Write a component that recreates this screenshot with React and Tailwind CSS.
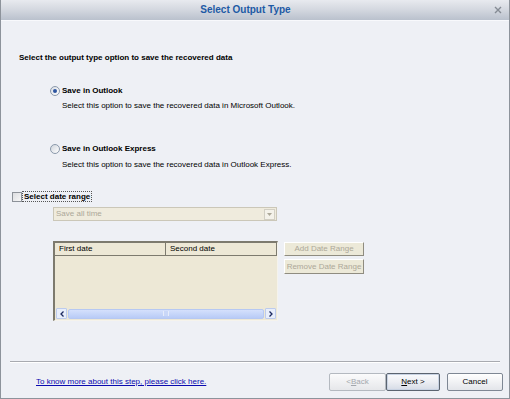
export default function App() {
  return (
    <div className="w-[510px] h-[399px] bg-[#eef0f5] overflow-hidden font-['Liberation_Sans',Arial,sans-serif] text-[8px] leading-[10px] text-black border-x border-b border-[#8d939b] flex flex-col">
      {/* Title bar */}
      <div className="h-[21px] shrink-0 bg-gradient-to-b from-[#e8eaef] via-[#d3d7df] to-[#bac1cd] border-b border-[#f8f9fc] grid grid-cols-[40px_1fr_40px] items-center">
        <div />
        <div className="text-center text-[#1d5aa5] font-bold text-[10px] leading-[12px] pr-[19px]">Select Output Type</div>
        <div className="flex justify-end pr-[7px]">
          <svg width="8" height="8" viewBox="0 0 8 8">
            <path d="M1 1 L7 7 M7 1 L1 7" stroke="#858b94" strokeWidth="1.4" />
          </svg>
        </div>
      </div>

      {/* Body */}
      <div className="flex flex-col flex-1">
        <div className="mt-[32px] pl-[18px] font-bold h-[10px]">Select the output type option to save the recovered data</div>

        {/* Option 1 */}
        <div className="mt-[23px] pl-[49px] flex items-center h-[10px] gap-[2px]">
          <span className="w-[10px] h-[10px] rounded-full border border-[#8b99ab] bg-gradient-to-br from-[#d8dde4] to-[#ffffff] flex items-center justify-center">
            <span className="w-[4px] h-[4px] rounded-full bg-[#2e55a0]" />
          </span>
          <span className="font-bold">Save in Outlook</span>
        </div>
        <div className="mt-[5px] pl-[61px] h-[10px]">Select this option to save the recovered data in Microsoft Outlook.</div>

        {/* Option 2 */}
        <div className="mt-[33px] pl-[49px] flex items-center h-[10px] gap-[2px]">
          <span className="w-[10px] h-[10px] rounded-full border border-[#8b99ab] bg-gradient-to-br from-[#d0d5dc] to-[#ffffff]" />
          <span className="font-bold">Save in Outlook Express</span>
        </div>
        <div className="mt-[6px] pl-[61px] h-[10px]">Select this option to save the recovered data in Outlook Express.</div>

        {/* Checkbox */}
        <div className="mt-[21px] pl-[11px] flex items-center h-[11px]">
          <span className="w-[10px] h-[10px] border border-[#8d9299] bg-gradient-to-br from-[#dcdde0] to-[#f7f7f7]" />
          <span className="font-bold border border-dotted border-[#555] px-[1px] leading-[9px]">Select date range</span>
        </div>

        {/* Combo */}
        <div className="mt-[5px] ml-[52px] w-[224px] h-[14px] border border-[#cbc7b8] bg-[#efebdd] flex items-center justify-between">
          <span className="pl-[2px] text-[#aca899]">Save all time</span>
          <span className="w-[11px] h-[11px] mr-[1px] border border-[#d2cfc4] bg-[#f4f2ea] flex items-center justify-center">
            <svg width="5" height="3" viewBox="0 0 5 3"><path d="M0 0 L5 0 L2.5 3 Z" fill="#aca899" /></svg>
          </span>
        </div>

        {/* List + buttons */}
        <div className="mt-[20px] ml-[52px] flex gap-[6px]">
          <div className="w-[225px] h-[80px] border-t-2 border-l-2 border-r border-b border-t-[#7d7a6e] border-l-[#7d7a6e] border-r-[#f5f3ec] border-b-[#f5f3ec] bg-[#ede8d6] flex flex-col">
            <div className="h-[13px] flex border-b border-[#7d7a6e]">
              <div className="w-[111px] border-r border-[#7d7a6e] pl-[4px] flex items-center">First date</div>
              <div className="flex-1 border-r border-[#7d7a6e] pl-[4px] flex items-center">Second date</div>
            </div>
            <div className="flex-1" />
            <div className="h-[12px] flex items-center gap-[1px] px-[1px] pb-[1px]">
              <span className="w-[11px] h-[11px] bg-[#e8eefb] border border-[#bccbed] rounded-[1px] flex items-center justify-center">
                <svg width="4" height="6" viewBox="0 0 4 6"><path d="M3.5 0.5 L1 3 L3.5 5.5" stroke="#1d2a60" strokeWidth="1.3" fill="none" /></svg>
              </span>
              <span className="flex-1 h-[10px] bg-gradient-to-b from-[#d4e0fc] to-[#b8cbf6] border border-[#b6c8f2] rounded-[2px] flex items-center justify-center">
                <span className="w-[6px] h-[5px] border-x border-[#e6ecfb] bg-[#c9d7f8]" />
              </span>
              <span className="w-[11px] h-[11px] bg-[#e8eefb] border border-[#bccbed] rounded-[1px] flex items-center justify-center">
                <svg width="4" height="6" viewBox="0 0 4 6"><path d="M0.5 0.5 L3 3 L0.5 5.5" stroke="#1d2a60" strokeWidth="1.3" fill="none" /></svg>
              </span>
            </div>
          </div>
          <div className="flex flex-col gap-[3px] pt-[1px]">
            <div className="w-[80px] h-[14px] bg-[#ece9d8] border border-t-[#ffffff] border-l-[#ffffff] border-r-[#8f8c80] border-b-[#8f8c80] text-[#aca899] flex items-center justify-center">Add Date Range</div>
            <div className="w-[80px] h-[15px] bg-[#ece9d8] border border-t-[#ffffff] border-l-[#ffffff] border-r-[#8f8c80] border-b-[#8f8c80] text-[#aca899] flex items-center justify-center">Remove Date Range</div>
          </div>
        </div>

        {/* Separator */}
        <div className="mt-[40px] mx-[9px] h-[2px] border-t border-[#a8aab0] border-b border-b-[#ffffff]" />

        {/* Footer */}
        <div className="mt-[10px] flex items-center pr-[6px]">
          <a className="ml-[35px] text-[#0a0ab0] underline">To know more about this step, please click here.</a>
          <div className="flex-1" />
          <div className="w-[57px] h-[18px] rounded-[2px] border border-[#b4b9c0] bg-gradient-to-b from-[#fbfbfc] to-[#e6e7ea] text-[#a3a7ad] flex items-center justify-center">&lt; <span className="underline">B</span>ack</div>
          <div className="w-[54px] h-[18px] rounded-[2px] border border-[#5b6470] bg-gradient-to-b from-[#fafbfd] via-[#eceef3] to-[#d5dbe6] flex items-center justify-center shadow-[inset_0_0_0_1px_#c9d3e3]"><span className="underline">N</span>ext &gt;</div>
          <div className="w-[56px] h-[18px] ml-[7px] rounded-[2px] border border-[#7e8794] bg-gradient-to-b from-[#ffffff] to-[#e3e5ea] flex items-center justify-center">Cancel</div>
        </div>
      </div>
    </div>
  );
}
